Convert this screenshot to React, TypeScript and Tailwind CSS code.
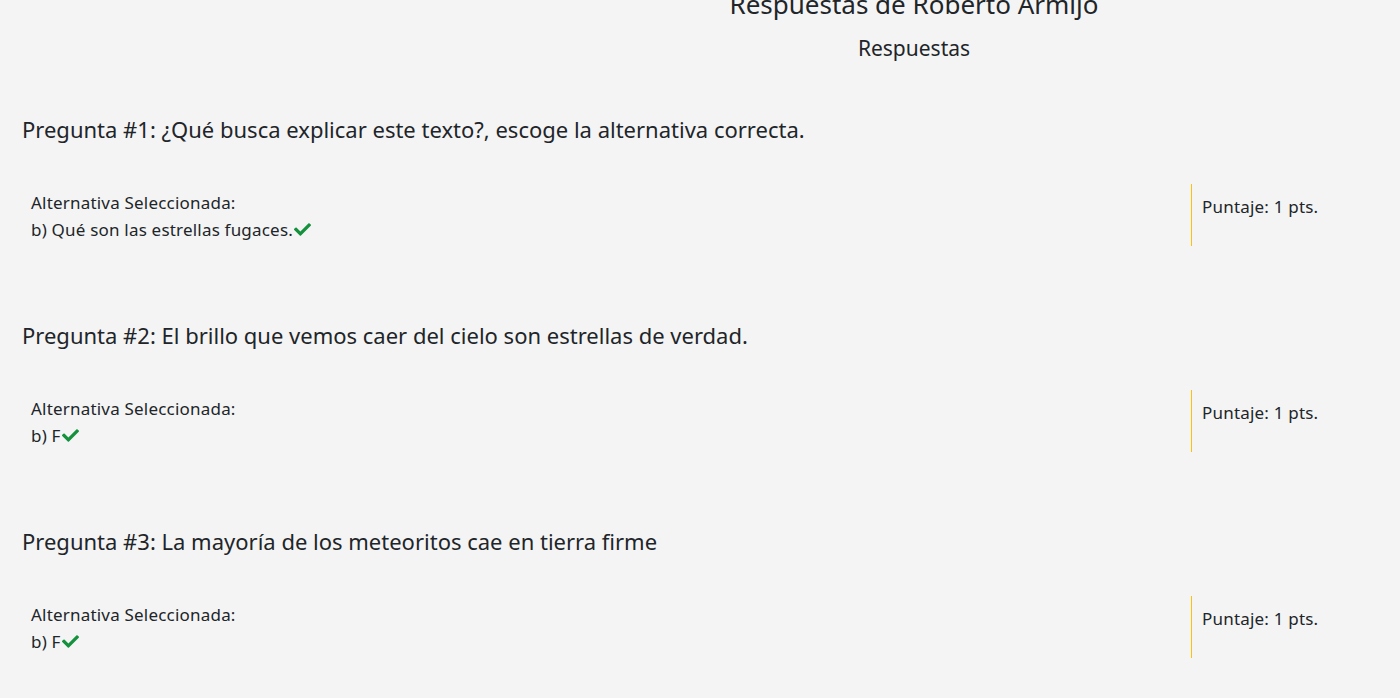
import { FaCheck } from "react-icons/fa";

const preguntas = [
  { n: 1, texto: "¿Qué busca explicar este texto?, escoge la alternativa correcta.", resp: "b) Qué son las estrellas fugaces." },
  { n: 2, texto: "El brillo que vemos caer del cielo son estrellas de verdad.", resp: "b) F" },
  { n: 3, texto: "La mayoría de los meteoritos cae en tierra firme", resp: "b) F" },
];

export default function App() {
  return (
    <div
      className="h-screen bg-[#f4f4f4] text-[#212529] overflow-hidden"
      style={{ fontFamily: '"Noto Sans", "Open Sans", sans-serif' }}
    >
      <div className="ml-[428px] text-center -mt-[14px]">
        <h1 className="text-[26px] leading-[36px]">Respuestas de Roberto Armijo</h1>
        <h2 className="text-[21px] leading-[28px] mt-[12px]">Respuestas</h2>
      </div>

      <div className="px-[22px] mt-[52px]">
        {preguntas.map((p) => (
          <div key={p.n} className="h-[206px]">
            <h3 className="text-[22px] leading-[30px]">
              Pregunta #{p.n}: {p.texto}
            </h3>
            <div className="flex mt-[40px]">
              <div className="flex-1 pl-[9px] text-[17px] tracking-[0.2px] leading-[27px] pt-[5px]">
                <div>Alternativa Seleccionada:</div>
                <div className="flex items-center">
                  {p.resp}
                  <FaCheck className="text-[#13913d] text-[17px] ml-[1px]" />
                </div>
              </div>
              <div className="w-[187px] h-[62px] border-l border-[#ffc107] pl-[10px] pt-[12px] text-[17px] tracking-[0.2px] leading-[22px]">
                Puntaje: 1 pts.
              </div>
            </div>
          </div>
        ))}
      </div>
    </div>
  );
}
